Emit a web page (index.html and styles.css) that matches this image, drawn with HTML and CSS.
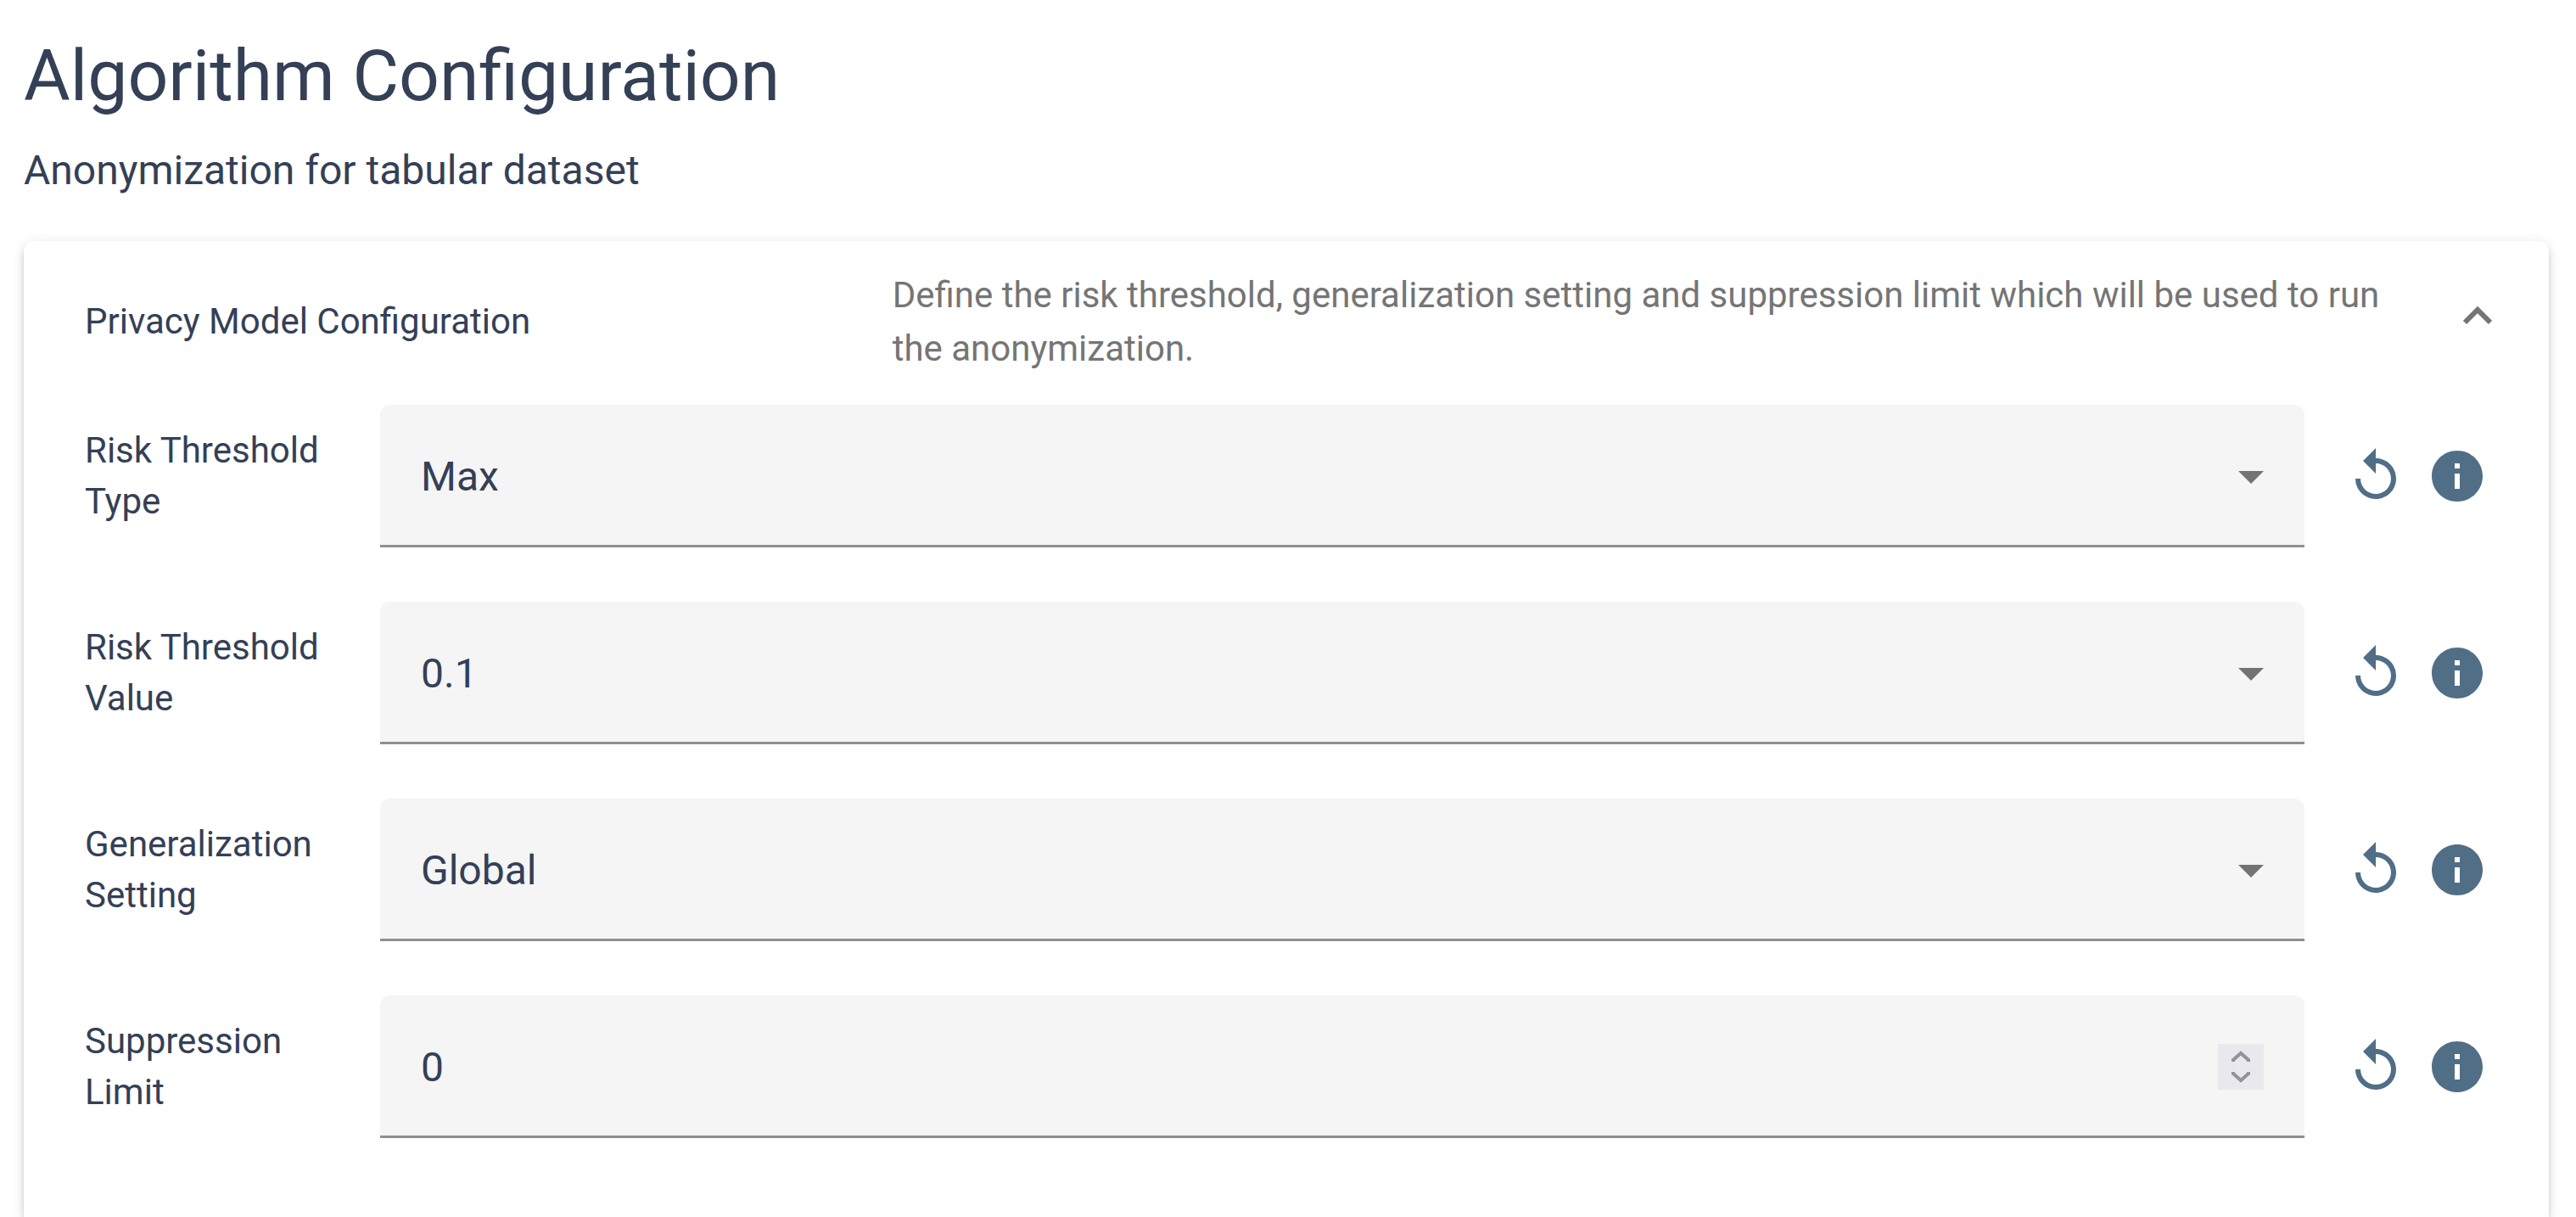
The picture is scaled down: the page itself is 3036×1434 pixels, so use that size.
FILE: index.html
```html
<!DOCTYPE html>
<html lang="en">
<head>
<meta charset="utf-8">
<title>Algorithm Configuration</title>
<link rel="stylesheet" href="styles.css">
</head>
<body>
<svg class="sprite" aria-hidden="true">
  <symbol id="replay" viewBox="0 0 24 24"><path d="M12 5V1L7 6l5 5V7c3.31 0 6 2.69 6 6s-2.69 6-6 6-6-2.69-6-6H4c0 4.42 3.58 8 8 8s8-3.58 8-8-3.58-8-8-8z"/></symbol>
  <symbol id="info" viewBox="0 0 24 24"><path d="M12 2C6.48 2 2 6.48 2 12s4.48 10 10 10 10-4.48 10-10S17.52 2 12 2zm1 15h-2v-6h2v6zm0-8h-2V7h2v2z"/></symbol>
  <symbol id="arrow" viewBox="0 0 30 18"><path d="M0 3h30L15 18z"/></symbol>
</svg>
<main class="page">
  <h1 class="page-title">Algorithm Configuration</h1>
  <p class="page-subtitle">Anonymization for tabular dataset</p>
  <section class="panel">
    <button class="panel-header" type="button" aria-expanded="true" aria-controls="privacy-model">
      <span class="panel-title">Privacy Model Configuration</span>
      <span class="panel-description">Define the risk threshold, generalization setting and suppression limit which will be used to run the anonymization.</span>
      <svg class="chevron" viewBox="0 0 34 38" aria-hidden="true"><path d="M2 20 17 5l15 15"/></svg>
    </button>
    <form class="panel-body" id="privacy-model">
      <div class="row">
        <label class="row-label" for="threshold-type">Risk Threshold Type</label>
        <div class="field">
          <select class="control" id="threshold-type"><option>Max</option></select>
          <svg class="field-arrow" aria-hidden="true"><use href="#arrow"/></svg>
        </div>
        <div class="actions">
          <button class="icon-button" type="button" aria-label="Reset"><svg class="icon"><use href="#replay"/></svg></button>
          <button class="icon-button" type="button" aria-label="Information"><svg class="icon"><use href="#info"/></svg></button>
        </div>
      </div>
      <div class="row">
        <label class="row-label" for="threshold-value">Risk Threshold Value</label>
        <div class="field">
          <select class="control" id="threshold-value"><option>0.1</option></select>
          <svg class="field-arrow" aria-hidden="true"><use href="#arrow"/></svg>
        </div>
        <div class="actions">
          <button class="icon-button" type="button" aria-label="Reset"><svg class="icon"><use href="#replay"/></svg></button>
          <button class="icon-button" type="button" aria-label="Information"><svg class="icon"><use href="#info"/></svg></button>
        </div>
      </div>
      <div class="row">
        <label class="row-label" for="generalization">Generalization Setting</label>
        <div class="field">
          <select class="control" id="generalization"><option>Global</option></select>
          <svg class="field-arrow" aria-hidden="true"><use href="#arrow"/></svg>
        </div>
        <div class="actions">
          <button class="icon-button" type="button" aria-label="Reset"><svg class="icon"><use href="#replay"/></svg></button>
          <button class="icon-button" type="button" aria-label="Information"><svg class="icon"><use href="#info"/></svg></button>
        </div>
      </div>
      <div class="row">
        <label class="row-label" for="suppression">Suppression Limit</label>
        <div class="field">
          <input class="control" id="suppression" type="number" value="0">
          <svg class="field-stepper" viewBox="0 0 54 54" aria-hidden="true"><path d="M18 21v-2l9-8 9 8v2M18 33v2l9 8 9-8v-2"/></svg>
        </div>
        <div class="actions">
          <button class="icon-button" type="button" aria-label="Reset"><svg class="icon"><use href="#replay"/></svg></button>
          <button class="icon-button" type="button" aria-label="Information"><svg class="icon"><use href="#info"/></svg></button>
        </div>
      </div>
    </form>
  </section>
</main>
</body>
</html>
```
FILE: styles.css
```css
* {
  box-sizing: border-box;
}

body {
  margin: 0;
  background: #fff;
  color: #344056;
  font-family: Roboto, "Liberation Sans", sans-serif;
  font-size: 42px;
}

button,
select,
input {
  margin: 0;
  border: 0;
  color: inherit;
  font: inherit;
}

.sprite {
  display: none;
}

.page {
  display: flex;
  flex-direction: column;
  min-height: 100vh;
  padding: 41px 32px 0 28px;
}

.page-title {
  margin: 0 0 26px;
  font-size: 84px;
  font-weight: 400;
  line-height: 98px;
}

.page-subtitle {
  margin: 0 0 47px;
  font-size: 48px;
  line-height: 72px;
}

.panel {
  flex: 1;
  padding-bottom: 48px;
  border-radius: 12px 12px 0 0;
  background: #fff;
  box-shadow:
    0 9px 3px -6px rgba(0, 0, 0, 0.2),
    0 6px 6px 0 rgba(0, 0, 0, 0.14),
    0 3px 15px 0 rgba(0, 0, 0, 0.12);
}

.panel-header {
  display: grid;
  grid-template-columns: 1fr 2fr 34px;
  align-items: center;
  column-gap: 52px;
  width: 100%;
  min-height: 193px;
  padding: 24px 67px 28px 72px;
  background: none;
  line-height: 63px;
  text-align: left;
}

.panel-description {
  color: #757575;
}

.chevron {
  width: 34px;
  height: 38px;
  fill: none;
  stroke: #757575;
  stroke-width: 6;
}

.panel-body {
  display: flex;
  flex-direction: column;
  gap: 64px;
  padding: 0 72px;
}

.row {
  display: grid;
  grid-template-columns: 300px 1fr auto;
  align-items: center;
  column-gap: 48px;
}

.row-label {
  line-height: 60px;
}

.field {
  display: grid;
  align-items: center;
}

.field > * {
  grid-area: 1 / 1;
}

.control {
  width: 100%;
  height: 168px;
  padding: 0 48px;
  border-radius: 12px 12px 0 0;
  background: #f5f5f5;
  box-shadow: inset 0 -3px #8f8f8f;
  font-size: 48px;
  appearance: none;
}

.control[type="number"] {
  appearance: textfield;
}

.control::-webkit-inner-spin-button {
  appearance: none;
}

.field-arrow,
.field-stepper {
  justify-self: end;
  margin-right: 48px;
  pointer-events: none;
}

.field-arrow {
  width: 30px;
  height: 18px;
  fill: #737373;
}

.field-stepper {
  width: 54px;
  height: 54px;
  background: #e9e8ed;
  fill: none;
  stroke: #9291a0;
  stroke-width: 4;
}

.actions {
  display: flex;
  gap: 24px;
}

.icon-button {
  padding: 0;
  background: none;
}

.icon {
  display: block;
  width: 72px;
  height: 72px;
  fill: #516e87;
}
```
